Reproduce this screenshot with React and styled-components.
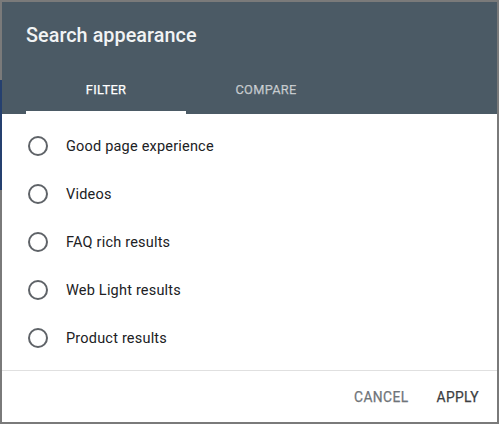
import React, { useState } from 'react';
import styled, { createGlobalStyle } from 'styled-components';

const GlobalStyle = createGlobalStyle`
  html, body {
    margin: 0;
    padding: 0;
  }
  body {
    background: linear-gradient(
      to bottom,
      #7a7a7a 0,
      #7a7a7a 80px,
      #25406f 80px,
      #25406f 190px,
      #7a7a7a 190px
    );
    background-size: 2px 100%;
    background-repeat: no-repeat;
    background-color: #7a7a7a;
    font-family: Roboto, 'Noto Sans', Arial, sans-serif;
  }
`;

const Page = styled.div`
  width: 499px;
  height: 424px;
  padding: 2px;
  box-sizing: border-box;
`;

const Dialog = styled.div`
  width: 495px;
  height: 420px;
  background: #fff;
  display: flex;
  flex-direction: column;
`;

const Header = styled.div`
  background: #4b5a65;
  display: flex;
  flex-direction: column;
`;

const Title = styled.h2`
  margin: 0;
  height: 63px;
  padding: 22px 24px 0;
  box-sizing: border-box;
  font-size: 19.8px;
  font-weight: 500;
  line-height: 24px;
  color: #f1f3f4;
  letter-spacing: 0.05px;
`;

const Tabs = styled.div`
  display: flex;
  padding-left: 24px;
  height: 49px;
`;

const Tab = styled.button`
  width: 160px;
  border: none;
  background: transparent;
  font-family: inherit;
  font-size: 12.8px;
  font-weight: 400;
  -webkit-text-stroke: 0.25px currentColor;
  letter-spacing: 0.3px;
  color: ${(p) => (p.$active ? '#ffffff' : 'rgba(255,255,255,0.62)')};
  border-bottom: 3px solid ${(p) => (p.$active ? '#ffffff' : 'transparent')};
  padding: 3px 0 0;
  cursor: pointer;
`;

const List = styled.div`
  padding: 8px 0;
  flex: 1;
`;

const Option = styled.label`
  display: flex;
  align-items: center;
  height: 48px;
  padding-left: 26px;
  cursor: pointer;
`;

const Radio = styled.span`
  width: 20px;
  height: 20px;
  box-sizing: border-box;
  border: 2px solid #5f6368;
  border-radius: 50%;
  margin-right: 18px;
  display: flex;
  align-items: center;
  justify-content: center;

  &::after {
    content: '';
    width: 10px;
    height: 10px;
    border-radius: 50%;
    background: ${(p) => (p.$checked ? '#5f6368' : 'transparent')};
  }
`;

const OptionText = styled.span`
  font-size: 14.5px;
  color: #202124;
  letter-spacing: 0.2px;
`;

const Footer = styled.div`
  border-top: 1px solid #e0e0e0;
  height: 52px;
  box-sizing: border-box;
  display: flex;
  align-items: center;
  justify-content: flex-end;
  gap: 12px;
  padding-right: 10px;
`;

const Action = styled.button`
  border: none;
  background: transparent;
  font-family: inherit;
  font-size: 13.8px;
  font-weight: 400;
  -webkit-text-stroke: 0.25px currentColor;
  letter-spacing: 0.4px;
  padding: 8px;
  color: ${(p) => (p.$primary ? '#3c4043' : '#6f7479')};
  cursor: pointer;
`;

const options = [
  'Good page experience',
  'Videos',
  'FAQ rich results',
  'Web Light results',
  'Product results',
];

const App = () => {
  const [tab, setTab] = useState('filter');
  const [selected, setSelected] = useState(null);

  return (
    <Page>
      <GlobalStyle />
      <Dialog>
        <Header>
          <Title>Search appearance</Title>
          <Tabs>
            <Tab $active={tab === 'filter'} onClick={() => setTab('filter')}>
              FILTER
            </Tab>
            <Tab $active={tab === 'compare'} onClick={() => setTab('compare')}>
              COMPARE
            </Tab>
          </Tabs>
        </Header>
        <List>
          {options.map((o) => (
            <Option key={o} onClick={() => setSelected(o)}>
              <Radio $checked={selected === o} />
              <OptionText>{o}</OptionText>
            </Option>
          ))}
        </List>
        <Footer>
          <Action>CANCEL</Action>
          <Action $primary>APPLY</Action>
        </Footer>
      </Dialog>
    </Page>
  );
};

export default App;
